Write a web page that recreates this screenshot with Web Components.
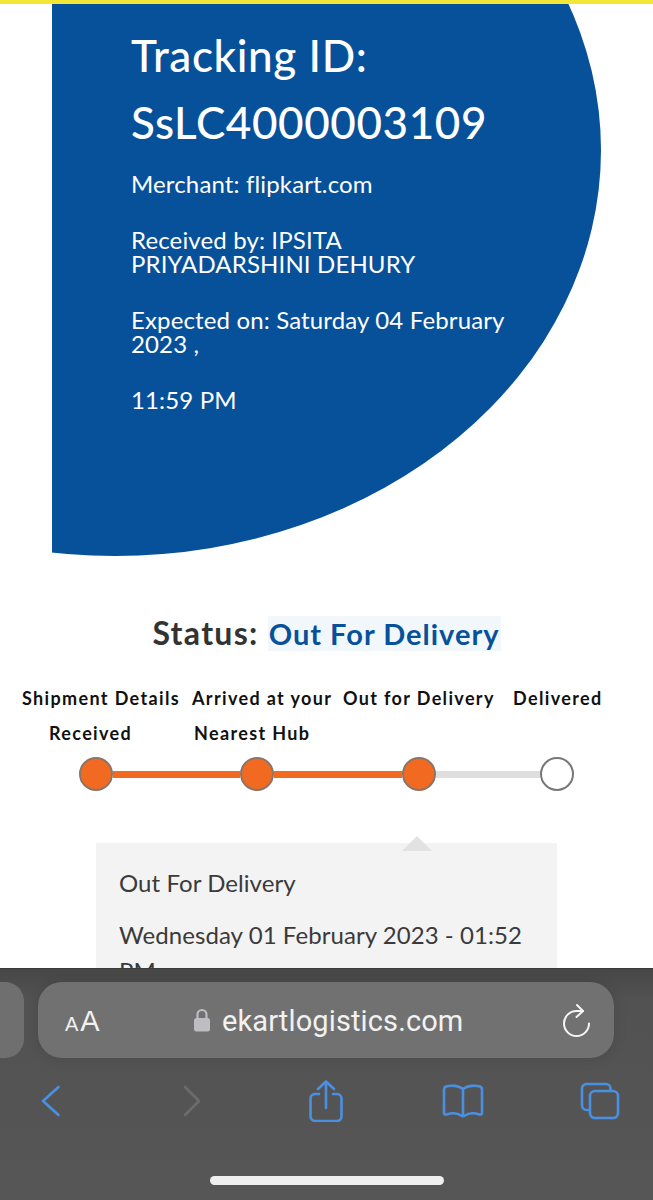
<!DOCTYPE html>
<html lang="en">
<head>
<meta charset="utf-8">
<title>Ekart tracking</title>
<style>
html,body{margin:0;padding:0;background:#fff}
body{font-family:Lato,"Liberation Sans",sans-serif}
</style>
</head>
<body>
<phone-screen>
  <tracking-hero>
    <h-line slot="title">Tracking ID:</h-line>
    <h-line slot="title">SsLC4000003109</h-line>
    <p slot="info">Merchant: flipkart.com</p>
    <p slot="info">Received by: IPSITA PRIYADARSHINI DEHURY</p>
    <p slot="info">Expected on: Saturday 04 February 2023 ,</p>
    <p slot="info">11:59 PM</p>
  </tracking-hero>
  <status-heading></status-heading>
  <step-tracker></step-tracker>
  <status-card></status-card>
  <safari-bar slot="overlay"></safari-bar>
</phone-screen>
<script>
const def=(name,html)=>customElements.define(name,class extends HTMLElement{
  constructor(){super();this.attachShadow({mode:'open'}).innerHTML=html;}
});
def('phone-screen',`<style>
:host{display:block;position:relative;width:653px;height:1200px;overflow:hidden;background:#fff;font-family:Lato,"Liberation Sans",sans-serif}
.top{height:4px;background:#f3e635}
</style><div class="top"></div><slot></slot><slot name="overlay"></slot>`);
def('h-line',`<style>:host{display:block}</style><slot></slot>`);
def('tracking-hero',`<style>
:host{display:block;margin-left:52px;width:560px;height:552px;background:#07519a;color:#fff;box-sizing:border-box;padding:18px 0 0 79px;clip-path:ellipse(486px 406px at 63px 146px)}
.t{font-size:44px;line-height:67px;font-weight:500;letter-spacing:.6px;width:420px}
.i{font-size:24px;line-height:24px;width:390px;margin-top:16px;letter-spacing:.14px}
::slotted(p){margin:0 0 32px;font:inherit}
</style><div class="t"><slot name="title"></slot></div><div class="i"><slot name="info"></slot></div>`);
def('status-heading',`<style>
:host{display:block;margin-top:59px;height:36px;text-align:center;font-size:32px;line-height:35px;font-weight:700;letter-spacing:1.3px;color:#333}
span{background:#f2f7fc;color:#07519a;padding:0 1px;font-size:29px;letter-spacing:1px}
</style>Status: <span>Out For Delivery</span>`);
def('step-tracker',`<style>
:host{display:block;margin-top:30px;color:#111;font-size:18px;font-weight:700;line-height:35px;letter-spacing:1.35px}
.labels{display:flex;white-space:nowrap;height:70px;padding-left:22px}
.l1{width:170px}.l2{width:151px}.l3{width:170px}
.sub{display:block}
.l1 .sub{padding-left:27px}.l2 .sub{padding-left:2px}
.track{display:flex;align-items:center;margin:6px 0 0 79px;height:34px}
.dot{flex:none;box-sizing:border-box;width:34px;height:34px;border-radius:50%;background:#f26a21;border:2px solid #8c7567;position:relative;z-index:1}
.dot.off{background:#fff;border-color:#777}
.bar{flex:none;height:7px;background:#f26a21}
.bar.off{background:#dedede}
</style>
<div class="labels">
  <div class="l1">Shipment Details<span class="sub">Received</span></div>
  <div class="l2">Arrived at your<span class="sub">Nearest Hub</span></div>
  <div class="l3">Out for Delivery</div>
  <div>Delivered</div>
</div>
<div class="track">
  <div class="dot"></div><div class="bar" style="width:127px"></div>
  <div class="dot"></div><div class="bar" style="width:128px"></div>
  <div class="dot"></div><div class="bar off" style="width:104px"></div>
  <div class="dot off"></div>
</div>`);
def('status-card',`<style>
:host{display:block;position:relative;box-sizing:border-box;margin:52px 0 0 96px;width:461px;background:#f3f3f3;padding:22px 23px 20px;color:#3a3a3a;font-size:24px;line-height:36px;letter-spacing:.06px}
:host::before{content:"";position:absolute;left:306px;top:-7px;border:15.5px solid transparent;border-top:0;border-bottom:15px solid #e2e2e2}
p{margin:0 0 16px}
</style><p>Out For Delivery</p><p>Wednesday 01 February 2023 - 01:52 PM</p>`);
def('safari-bar',`<style>
:host{display:block;position:absolute;left:0;right:0;top:968px;height:232px;background:linear-gradient(#474747,#525252 30px,#565656);border-top:1px solid #3c3c3c;box-sizing:border-box;font-family:"Liberation Sans",Inter,sans-serif;overflow:hidden}
.row{display:flex;margin-top:13px;height:76px}
.stub{flex:none;width:24px;background:#6f6f6f;border-radius:0 19px 19px 0}
.url{flex:none;margin-left:14px;width:576px;background:#717171;border-radius:24px;display:flex;align-items:center;box-sizing:border-box;padding:0 23px 0 27px;color:#f2f2f2;box-shadow:0 0 14px rgba(0,0,0,.12)}
.aa{width:129px;font-size:29px;line-height:1;flex:none;padding-top:2px}
.aa small{font-size:20px;margin-right:2px}
.lock{flex:none;width:16px;height:24px;margin-right:12px}
.dom{font-size:29px;line-height:1;font-family:Roboto,"Liberation Sans",sans-serif;letter-spacing:.12px;flex:none;padding-top:2px}
.re{flex:none;margin-left:auto;width:28px;height:32px;overflow:visible}
.tools{display:flex;align-items:center;height:44px;margin-top:21px;padding-left:41px}
svg{display:block;fill:none;stroke:#4a90e2;stroke-width:2.6;stroke-linecap:round;stroke-linejoin:round}
.home{width:234px;height:9px;border-radius:5px;background:#efefef;margin:53px 0 0 210px}
</style>
<div class="row">
  <div class="stub"></div>
  <div class="url">
    <div class="aa"><small>A</small>A</div>
    <svg class="lock" viewBox="0 0 16 24" style="stroke:none"><path d="M3.500 11V6.500a4.500 4.500 0 0 1 9 0V11" fill="none" stroke="#bdbdc2" stroke-width="2.200"/><rect x="0" y="10" width="16" height="13.500" rx="2.500" fill="#bdbdc2"/></svg>
    <div class="dom">ekartlogistics.com</div>
    <svg class="re" viewBox="0 0 28 32" style="stroke:#f5f5f5;stroke-width:2"><path d="M26 19.500A12.500 12.500 0 1 1 13.500 7H20"/><path d="M14 1l6 6-6.500 6"/></svg>
  </div>
</div>
<div class="tools">
  <svg width="19" height="32" viewBox="0 0 19 32"><path d="M17.500 2 2 16l15.500 14"/></svg>
  <svg width="18" height="32" viewBox="0 0 18 32" style="margin-left:123px;stroke:#6c6c6c"><path d="M2 2l14 14L2 30"/></svg>
  <svg width="34" height="42" viewBox="0 0 34 42" style="margin-left:108px"><path d="M10 14H6a4.500 4.500 0 0 0-4.500 4.500v18A4.500 4.500 0 0 0 6 41h22a4.500 4.500 0 0 0 4.500-4.500v-18A4.500 4.500 0 0 0 28 14h-4"/><path d="M17 28V2M9 9l8-7.500L25 9"/></svg>
  <svg width="42" height="34" viewBox="0 0 42 34" style="margin-left:99px"><path d="M21 5C17 1.500 9 1 4 2.500 2.500 3 2 4 2 5.500V29c0 1.300 1 1.800 2.500 1.400 5-1.500 11-1.500 14.500 1.100 1.300.9 2.700.9 4 0 3.500-2.600 9.500-2.600 14.500-1.100 1.500.4 2.500-.1 2.500-1.400V5.500c0-1.500-.5-2.500-2-3C33 1 25 1.500 21 5zM21 5v25"/></svg>
  <svg width="40" height="38" viewBox="0 0 40 38" style="margin-left:96px"><path d="M8 28H6.500A4.500 4.500 0 0 1 2 23.500V6.500A4.500 4.500 0 0 1 6.500 2H26a4.500 4.500 0 0 1 4.500 4.500V9"/><rect x="10" y="9" width="28" height="27" rx="5"/></svg>
</div>
<div class="home"></div>`);
</script>
</body>
</html>
